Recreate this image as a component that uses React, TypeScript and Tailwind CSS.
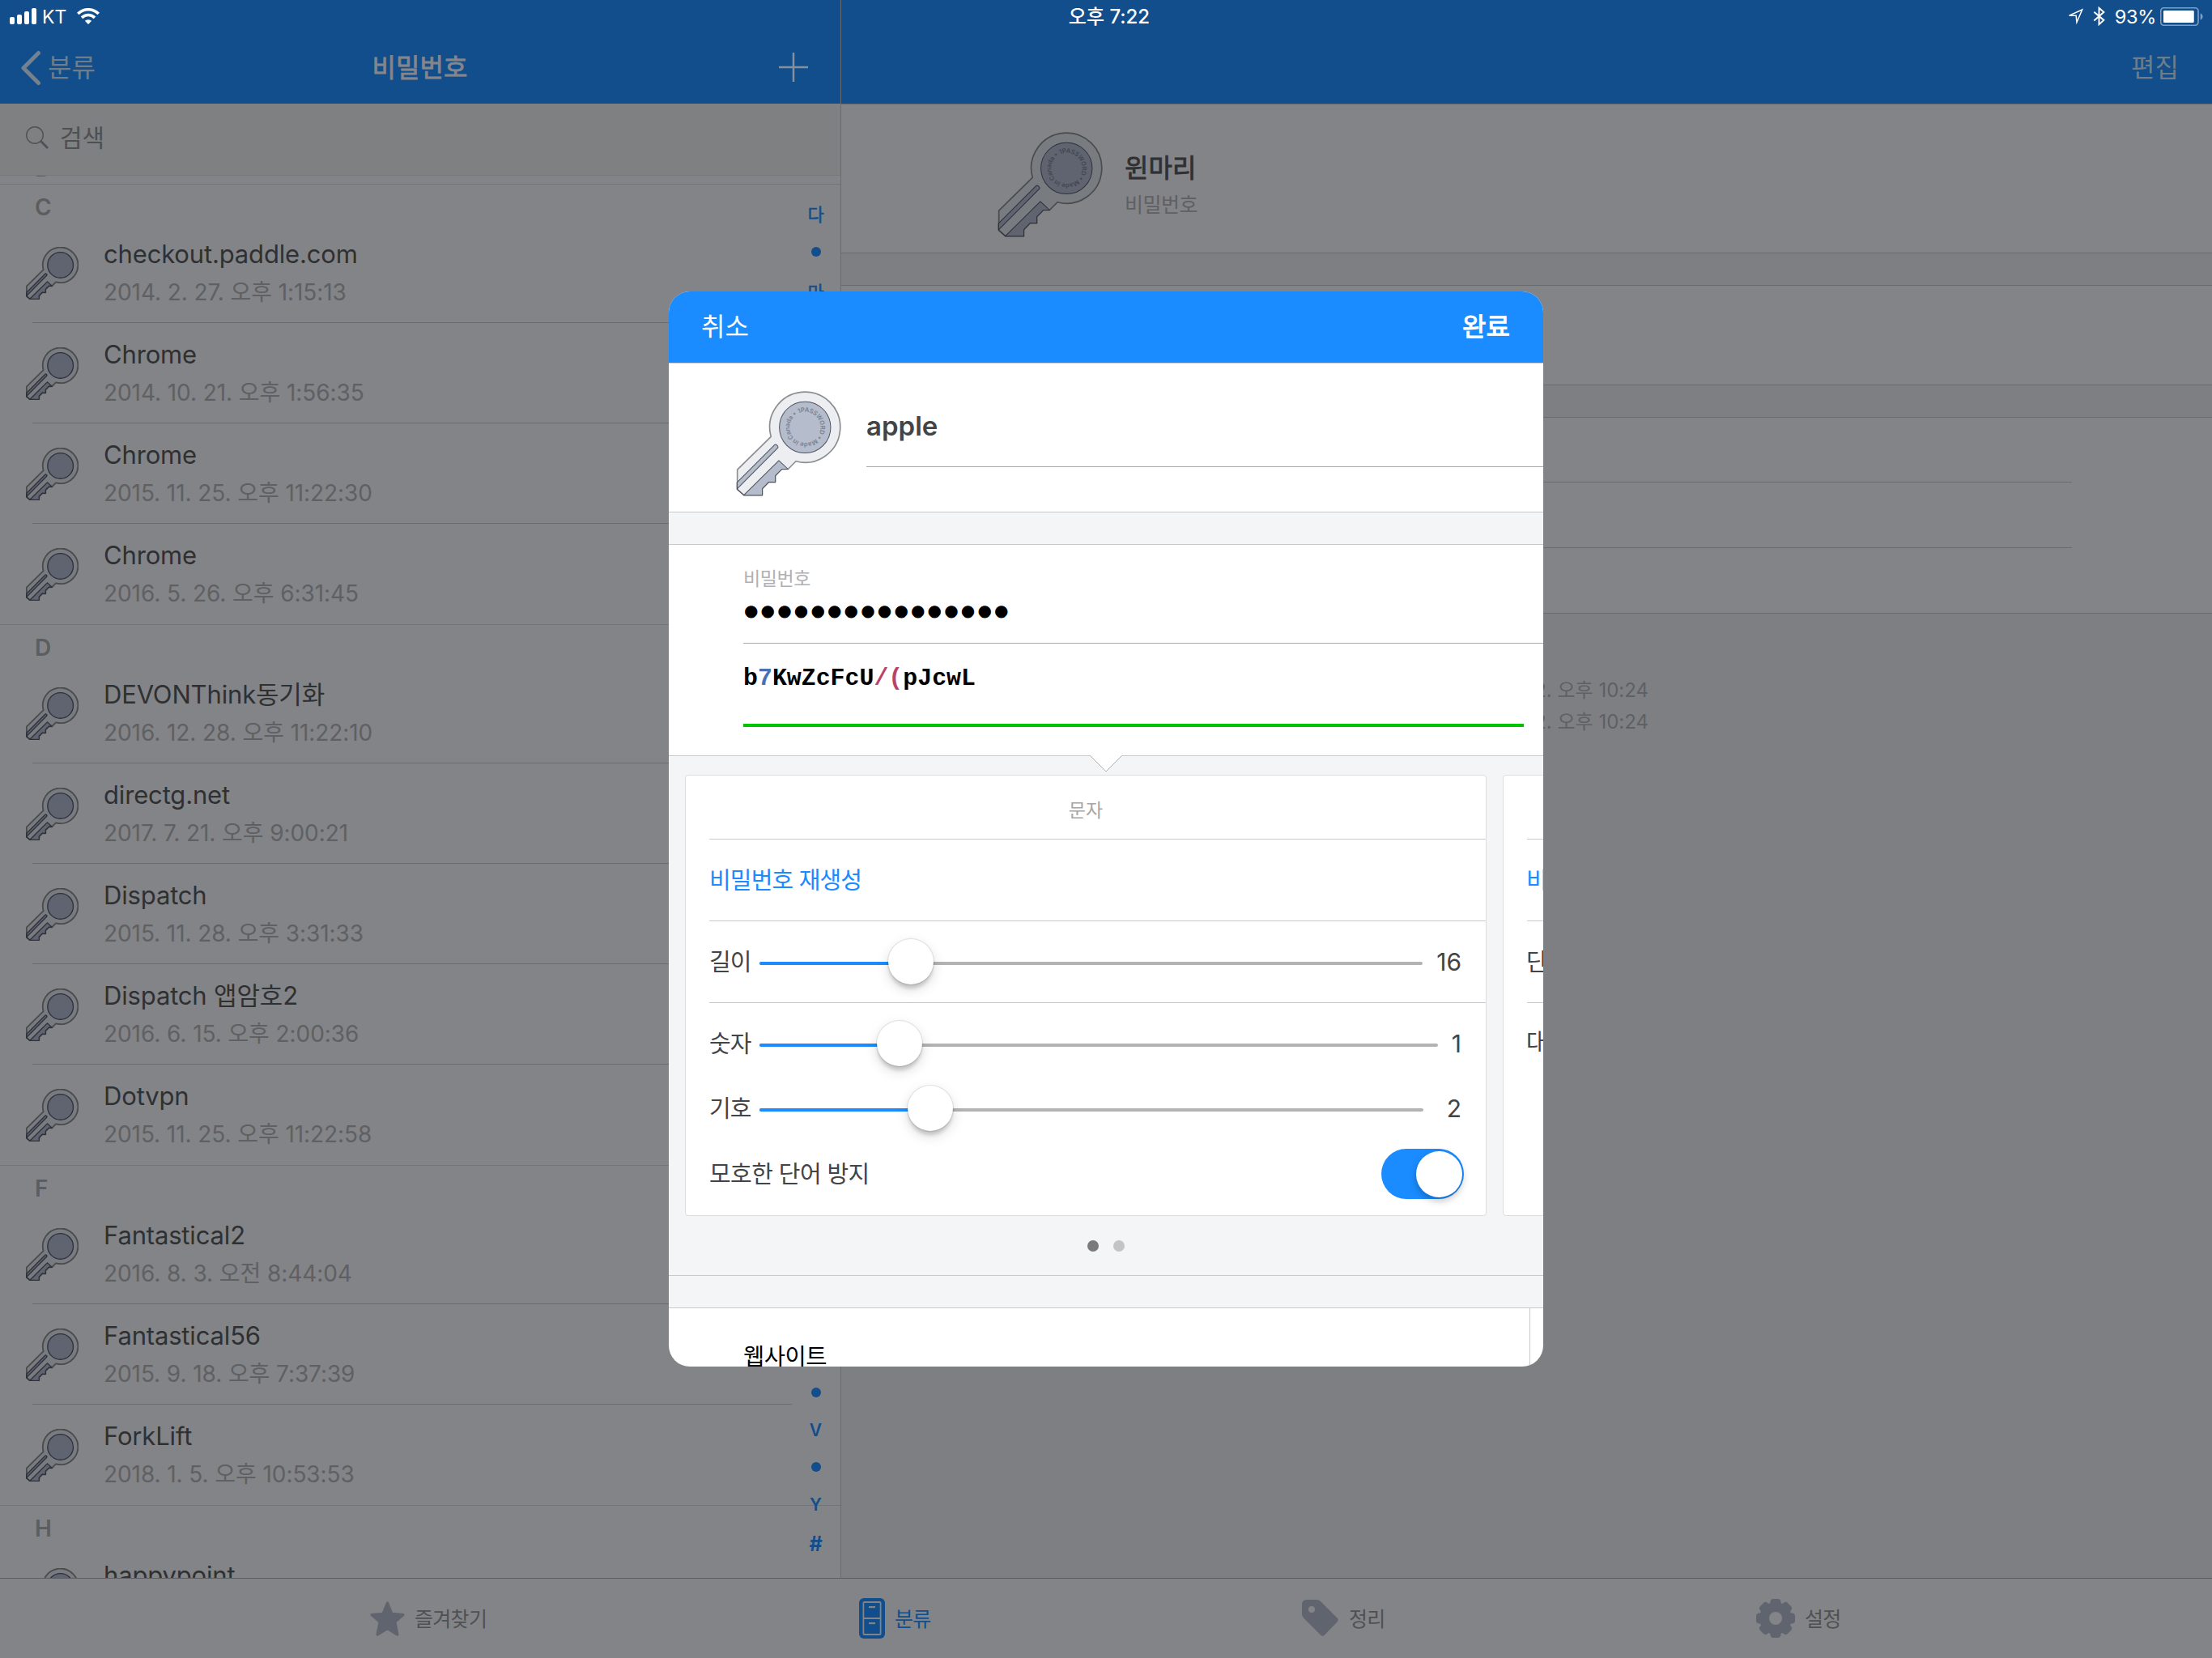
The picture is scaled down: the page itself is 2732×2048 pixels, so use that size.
import React from 'react';

type KeyTone = {
  body: string;
  bodyStroke: string;
  fill: string;
  stroke: string;
  text: string;
};

const brightKey: KeyTone = { body: '#edeef2', bodyStroke: '#8b8d8f', fill: '#b5bccb', stroke: '#4e535f', text: '#7b8190' };
const dimKey: KeyTone = { body: '#787b7f', bodyStroke: '#494b4d', fill: '#5f6470', stroke: '#2e313a', text: '#42464f' };

function KeyIcon({ tone, className, small = false, id }: { tone: KeyTone; className: string; small?: boolean; id: string }) {
  const outer = small ? 11 : 5;
  const inner = small ? 8 : 3;
  return (
    <svg viewBox="58 40 388 388" className={className} strokeLinejoin="round">
      <path
        d="M187 208A130 130 0 1 1 279 299L250 328H227L203 352V376H178L155 400V424H87L63 402V330Z"
        fill={tone.body}
        stroke={tone.bodyStroke}
        strokeWidth={outer}
      />
      <path
        d="M87 424L216 296L250 328H227L203 352V376H178L155 400V424Z"
        fill={tone.fill}
        stroke={tone.stroke}
        strokeWidth={inner}
      />
      <path
        d="M62 377L200 239Q204 235 208 239L212 243Q215 247 211 251L62 401Z"
        fill={tone.fill}
        stroke={tone.stroke}
        strokeWidth={inner}
      />
      <path d="M62 377V402L87 424" fill="none" stroke={tone.stroke} strokeWidth={inner} />
      <circle cx="312.500" cy="174" r="94.500" fill={tone.fill} stroke={tone.stroke} strokeWidth={inner} />
      {!small && (
        <>
          <path id={id} d="M289 122A57 57 0 0 1 336 226A57 57 0 0 1 289 122" fill="none" />
          <text className="font-['Inter',sans-serif] text-[23px] font-semibold" fill={tone.text}>
            <textPath href={`#${id}`} textLength="350">
              1PASSWORD • Made in Canada •
            </textPath>
          </text>
        </>
      )}
    </svg>
  );
}

const sections = [
  {
    letter: 'C',
    items: [
      ['checkout.paddle.com', '2014. 2. 27. 오후 1:15:13'],
      ['Chrome', '2014. 10. 21. 오후 1:56:35'],
      ['Chrome', '2015. 11. 25. 오후 11:22:30'],
      ['Chrome', '2016. 5. 26. 오후 6:31:45'],
    ],
  },
  {
    letter: 'D',
    items: [
      ['DEVONThink동기화', '2016. 12. 28. 오후 11:22:10'],
      ['directg.net', '2017. 7. 21. 오후 9:00:21'],
      ['Dispatch', '2015. 11. 28. 오후 3:31:33'],
      ['Dispatch 앱암호2', '2016. 6. 15. 오후 2:00:36'],
      ['Dotvpn', '2015. 11. 25. 오후 11:22:58'],
    ],
  },
  {
    letter: 'F',
    items: [
      ['Fantastical2', '2016. 8. 3. 오전 8:44:04'],
      ['Fantastical56', '2015. 9. 18. 오후 7:37:39'],
      ['ForkLift', '2018. 1. 5. 오후 10:53:53'],
    ],
  },
  { letter: 'H', items: [['happypoint', '']] },
];

function ListRow({ title, date, last, id }: { title: string; date: string; last: boolean; id: string }) {
  return (
    <div className="relative flex h-[124px] shrink-0 pl-[32px]">
      <KeyIcon tone={dimKey} small id={id} className="mt-[29.500px] size-[65px] shrink-0" />
      <div className="ml-[31px] flex flex-col pt-[19px]">
        <div className="h-[40px] whitespace-nowrap text-[31px] leading-[40px] tracking-[-0.160px] text-[#2f3032]">{title}</div>
        <div className="mt-[9px] h-[36px] whitespace-nowrap text-[28px] leading-[36px] tracking-[-0.080px] text-[#5f6063]">{date}</div>
      </div>
      {!last && <div className="absolute bottom-0 left-[40px] right-[60px] h-px bg-[#6a6b6e]" />}
    </div>
  );
}

function IndexDot() {
  return <span className="size-[12px] rounded-full bg-[#114e8b]" />;
}

function Sidebar() {
  return (
    <div className="relative flex w-[1039px] shrink-0 flex-col border-r border-[#6a6b6f] bg-[#838487]">
      <div className="grid h-[128px] shrink-0 grid-cols-[1fr_auto_1fr] items-center bg-[#114e8b] pl-[25px] pr-[40px] pt-[40px]">
        <div className="flex items-center gap-[8px] text-[#6f7c8a]">
          <svg viewBox="0 0 26 44" className="h-[44px] w-[26px]" fill="none" stroke="#74818e" strokeWidth="5" strokeLinecap="round" strokeLinejoin="round">
            <path d="M22.500 3.500L4 22L22.500 40.500" />
          </svg>
          <span className="text-[32px] leading-[40px]">분류</span>
        </div>
        <div className="pl-[14px] text-[32px] leading-[40px] text-[#84868b] [-webkit-text-stroke:0.8px_#84868b]">비밀번호</div>
        <svg viewBox="0 0 36 36" className="mb-[2px] size-[36px] justify-self-end" stroke="#84909c" strokeWidth="2.500">
          <path d="M18 0V36M0 18H36" />
        </svg>
      </div>
      <div className="flex h-[89px] shrink-0 items-center gap-[13px] border-b border-[#74787b] bg-[#7e8082] pb-[4px] pl-[31px]">
        <svg viewBox="0 0 30 30" className="size-[30px]" fill="none" stroke="#505154">
          <circle cx="12" cy="12" r="10.300" strokeWidth="1.400" />
          <path d="M19.500 19.500L28 28" strokeWidth="2.800" />
        </svg>
        <span className="text-[30px] leading-[40px] text-[#4e4f52]">검색</span>
      </div>
      <div className="relative h-[10px] shrink-0 overflow-hidden">
        <div className="absolute bottom-[12px] left-[43px] text-[28px] font-semibold leading-[14px] text-[#5c5d60]">B</div>
      </div>
      <div className="flex min-h-0 flex-1 flex-col overflow-hidden">
        {sections.map((s) => (
          <React.Fragment key={s.letter}>
            <div className="flex h-[48px] shrink-0 items-center border-t border-[#727377] pl-[43px] pt-[8px] text-[28px] font-semibold leading-[38px] text-[#5c5d60]">
              {s.letter}
            </div>
            {s.items.map(([title, date], i) => (
              <ListRow key={i} id={`${s.letter}${i}`} title={title} date={date} last={i === s.items.length - 1} />
            ))}
          </React.Fragment>
        ))}
      </div>
      <div className="absolute left-[987px] top-[242px] flex w-[41px] flex-col items-center text-[22px] text-[#114e8b] [-webkit-text-stroke:0.5px_#114e8b]">
        <span className="flex h-[46px] items-center">다</span>
        <span className="flex h-[46px] items-center">
          <IndexDot />
        </span>
        <span className="flex h-[54px] items-center">마</span>
      </div>
      <div className="absolute left-[987px] top-[1697px] flex w-[41px] flex-col items-center text-[21px] font-semibold text-[#114e8b]">
        <span className="flex h-[46px] items-center">
          <IndexDot />
        </span>
        <span className="flex h-[46px] items-center pt-px">V</span>
        <span className="flex h-[46px] items-center">
          <IndexDot />
        </span>
        <span className="flex h-[47px] items-center">Y</span>
        <span className="flex h-[51px] items-center text-[25px] font-bold">#</span>
      </div>
    </div>
  );
}

function Detail() {
  return (
    <div className="flex flex-1 flex-col bg-[#7e7f82]">
      <div className="flex h-[128px] shrink-0 items-center justify-end bg-[#114e8b] pr-[41px] pt-[40px] text-[32px] leading-[40px] text-[#6f7c8a]">
        편집
      </div>
      <div className="flex h-[185px] shrink-0 border-y border-[#6a6b6e] bg-[#838487] pl-[193px]">
        <KeyIcon tone={dimKey} id="detail-key" className="mt-[34px] size-[130px] shrink-0" />
        <div className="ml-[27px] flex flex-col pt-[59px]">
          <div className="text-[32px] leading-[40px] text-[#2f3032] [-webkit-text-stroke:0.8px_#2f3032]">윈마리</div>
          <div className="mt-[7px] text-[25px] leading-[36px] tracking-[-0.500px] text-[#5f6063]">비밀번호</div>
        </div>
      </div>
      <div className="h-[39px] shrink-0" />
      <div className="h-[124px] shrink-0 border-y border-[#6a6b6e] bg-[#838487]" />
      <div className="h-[39px] shrink-0" />
      <div className="flex h-[243px] shrink-0 flex-col border-y border-[#6a6b6e] bg-[#838487] pr-[173px]">
        <div className="h-[80px] border-b border-[#6a6b6e]" />
        <div className="h-[81px] border-b border-[#6a6b6e]" />
      </div>
      <div className="w-[997px] pt-[75px] text-right text-[24px] leading-[39px] text-[#5f6064]">
        <div>2. 오후 10:24</div>
        <div>2. 오후 10:24</div>
      </div>
    </div>
  );
}

function StatusBar() {
  return (
    <div className="absolute inset-x-0 top-0 grid h-[40px] grid-cols-[1fr_auto_1fr] items-center pl-[12px] pr-[11px] text-[24px] leading-[30px] text-white">
      <div className="flex items-center">
        <div className="flex h-[20px] items-end gap-[3px]">
          <span className="h-[9px] w-[6px] rounded-[2px] bg-white" />
          <span className="h-[12px] w-[6px] rounded-[2px] bg-white" />
          <span className="h-[16px] w-[6px] rounded-[2px] bg-white" />
          <span className="h-[20px] w-[6px] rounded-[2px] bg-white" />
        </div>
        <span className="ml-[7px] mt-[2px] text-[23px]">KT</span>
        <svg viewBox="285 30 84 60" className="ml-[13px] h-[20px] w-[28px]" fill="none" stroke="#fff" strokeWidth="11">
          <path d="M288.800 51.200A54 54 0 0 1 365.200 51.200" />
          <path d="M303 65.500A34 34 0 0 1 351 65.500" />
          <path d="M327 90L314.500 77.500A18 18 0 0 1 339.500 77.500Z" fill="#fff" stroke="none" />
        </svg>
      </div>
      <div className="mt-[2px] pl-[7px] font-medium">오후 7:22</div>
      <div className="flex items-center justify-end">
        <svg viewBox="104 32 58 60" className="h-[20px] w-[19px]" fill="none" stroke="#fff" strokeWidth="4.500">
          <path d="M109 59.500L158 37.500L137.500 85L135 60Z" />
        </svg>
        <svg viewBox="196 24 46 72" className="ml-[12px] h-[24px] w-[15px]" fill="none" stroke="#fff" strokeWidth="6">
          <path d="M200 44L237 75L219 91V29L237 45L200 77" />
        </svg>
        <span className="ml-[12px] mt-[2px] text-[23.500px] tracking-[-0.300px]">93%</span>
        <svg viewBox="444 27 160 69" className="ml-[5px] h-[23px] w-[53px]">
          <rect x="446" y="29" width="140" height="65" rx="12" fill="none" stroke="#7d9fc4" strokeWidth="5" />
          <rect x="456" y="39" width="114" height="45" rx="4" fill="#fff" />
          <path d="M594 49Q603 54 603 61.500T594 74Z" fill="#7d9fc4" />
        </svg>
      </div>
    </div>
  );
}

function TabBar() {
  return (
    <div className="flex h-[99px] shrink-0 items-center border-t border-[#5b5c60] bg-[#838487] pl-[457px] text-[25px] leading-[36px] tracking-[-0.700px] text-[#4f5053]">
      <div className="flex w-[604px] items-center">
        <svg viewBox="50 87 128 129" className="size-[43px]" fill="#60646f" stroke="#60646f" strokeWidth="10" strokeLinejoin="round">
          <path d="M114 93L130 133L172 137L142 163L151 210L114 188L77 210L86 163L56 137L98 133Z" />
        </svg>
        <span className="ml-[12px] mt-[2px]">즐겨찾기</span>
      </div>
      <div className="flex w-[547px] items-center text-[#114e8b]">
        <svg viewBox="0 0 32 50" className="h-[50px] w-[32px]">
          <rect width="32" height="50" rx="6" fill="#114e8b" />
          <rect x="4.500" y="4" width="23" height="42" rx="2" fill="#838487" />
          <rect x="6.300" y="6" width="19.400" height="18" fill="#114e8b" />
          <rect x="6.300" y="26" width="19.400" height="18" fill="#114e8b" />
          <rect x="12" y="10" width="8" height="2.200" fill="#838487" />
          <rect x="12" y="30" width="8" height="2.200" fill="#838487" />
        </svg>
        <span className="ml-[12px] mt-[2px]">분류</span>
      </div>
      <div className="flex w-[561px] items-center">
        <svg viewBox="0 0 46 46" className="size-[46px]">
          <path
            fillRule="evenodd"
            fill="#60646f"
            d="M6 0H18Q21 0 23 2L43.500 22.500Q46 25 43.500 27.500L28 43.500Q25.500 46 23 43.500L2 22.500Q0 20.500 0 18V6Q0 0 6 0ZM12 8A4 4 0 1 0 12 16A4 4 0 1 0 12 8Z"
          />
        </svg>
        <span className="ml-[12px] mt-[2px]">정리</span>
      </div>
      <div className="flex items-center">
        <svg viewBox="-24 -24 48 48" className="size-[48px]" fill="#60646f">
          <circle r="20" />
          <rect x="-6.500" y="-24" width="13" height="48" rx="4" />
          <rect x="-6.500" y="-24" width="13" height="48" rx="4" transform="rotate(45)" />
          <rect x="-6.500" y="-24" width="13" height="48" rx="4" transform="rotate(90)" />
          <rect x="-6.500" y="-24" width="13" height="48" rx="4" transform="rotate(135)" />
          <circle r="8" fill="#838487" />
        </svg>
        <span className="ml-[12px] mt-[2px]">설정</span>
      </div>
    </div>
  );
}

function SliderRow({ label, value, width, position }: { label: string; value: string; width: number; position: number }) {
  return (
    <div className="flex h-full items-center pr-[30px] text-[#434446]">
      <span className="mt-[2px] w-[62px] shrink-0 text-[29px] leading-[36px] tracking-[-1px]">{label}</span>
      <div className="relative mt-[4px] h-[4px] shrink-0 rounded-full bg-[#b3b3b5]" style={{ width }}>
        <div className="h-full rounded-full bg-[#1a8cff]" style={{ width: position }} />
        <div
          className="absolute -top-[28px] -ml-[28px] size-[56px] rounded-full bg-white shadow-[0_0_1px_1px_rgba(0,0,0,0.100),0_6px_4px_-1px_rgba(0,0,0,0.150),0_6px_16px_rgba(0,0,0,0.150)]"
          style={{ left: position }}
        />
      </div>
      <span className="flex-1 text-right text-[30px] leading-[36px]">{value}</span>
    </div>
  );
}

function Generator() {
  return (
    <div className="relative flex h-[642px] shrink-0 flex-col border-b border-[#c8c9cc] bg-[#f4f5f7]">
      <svg viewBox="0 0 40 21" className="absolute -top-px left-[520px] h-[21px] w-[40px]">
        <path d="M0.500 0L20 20L39.500 0Z" fill="#fff" />
        <path d="M0.500 0.500L20 20L39.500 0.500" fill="none" stroke="#b0b1b4" strokeWidth="1" />
      </svg>
      <div className="ml-[20px] mt-[23px] flex gap-[20px]">
        <div className="h-[545px] w-[990px] shrink-0 rounded-[4px] border border-[#dcdddf] bg-white pl-[29px]">
          <div className="flex h-[79px] items-center justify-center border-b border-[#c8c9cc] pr-[29px] pt-[9px] text-[23px] text-[#a6a6a8]">
            문자
          </div>
          <div className="flex h-[101px] items-center border-b border-[#c8c9cc] pt-[2px] text-[29px] tracking-[-0.850px] text-[#1a8cff]">비밀번호 재생성</div>
          <div className="h-[101px] border-b border-[#c8c9cc]">
            <SliderRow label="길이" value="16" width={819} position={187} />
          </div>
          <div className="mt-[10px] h-[80px]">
            <SliderRow label="숫자" value="1" width={838} position={173} />
          </div>
          <div className="h-[80px]">
            <SliderRow label="기호" value="2" width={820} position={211} />
          </div>
          <div className="flex h-[80px] items-center justify-between pr-[27px] pt-[2px] text-[29px] tracking-[-0.600px] text-[#434446]">
            <span className="mt-[1px]">모호한 단어 방지</span>
            <span className="flex h-[62px] w-[102px] items-center justify-end rounded-full bg-[#1a8cff] pr-[2px]">
              <span className="size-[57px] rounded-full bg-white shadow-[0_4px_10px_rgba(0,0,0,0.250)]" />
            </span>
          </div>
        </div>
        <div className="h-[545px] w-[990px] shrink-0 rounded-[4px] border border-[#dcdddf] bg-white pl-[28px] text-[29px] text-[#434446]">
          <div className="ml-[1px] h-[79px] border-b border-[#c8c9cc]" />
          <div className="ml-[1px] h-[101px] border-b border-[#c8c9cc]">
            <div className="-ml-[1px] flex h-full items-center pt-[2px] text-[#1a8cff]">비</div>
          </div>
          <div className="ml-[1px] h-[101px] border-b border-[#c8c9cc]">
            <div className="-ml-[1px] flex h-full items-center pt-[2px]">단</div>
          </div>
          <div className="flex h-[97px] items-center">대</div>
        </div>
      </div>
      <div className="ml-[517px] mt-[30px] flex gap-[18px]">
        <span className="size-[14px] rounded-full bg-[#7a7a7c]" />
        <span className="size-[14px] rounded-full bg-[#c3c4c6]" />
      </div>
    </div>
  );
}

function EditModal() {
  return (
    <div className="absolute left-[826px] top-[360px] flex h-[1328px] w-[1080px] flex-col overflow-hidden rounded-[26px] bg-white">
      <div className="flex h-[88px] shrink-0 items-center justify-between bg-[#1a8cff] pl-[40px] pr-[41px] text-[32px] leading-[40px] text-white">
        <span>취소</span>
        <span className="[-webkit-text-stroke:1px_#fff]">완료</span>
      </div>
      <div className="flex h-[185px] shrink-0 border-y border-[#c8c9cc] pl-[83px]">
        <KeyIcon tone={brightKey} id="edit-key" className="mt-[34px] size-[130px] shrink-0" />
        <div className="ml-[31px] flex h-[128px] flex-1 items-center border-b border-[#a8a9ab] pt-[29px] text-[33px] font-semibold text-[#434446]">
          apple
        </div>
      </div>
      <div className="h-[39px] shrink-0 bg-[#f4f5f7]" />
      <div className="flex h-[262px] shrink-0 flex-col border-y border-[#c8c9cc] pl-[92px]">
        <div className="mt-[27px] text-[23px] leading-[30px] tracking-[-0.400px] text-[#b0b0b2]">비밀번호</div>
        <div className="mt-[4px] border-b border-[#a8a9ab] pb-[20px] pl-[1px] font-['DejaVu_Sans',sans-serif] text-[20px] leading-[40px] tracking-[3.150px] text-black">
          ●●●●●●●●●●●●●●●●
        </div>
        <div className="mt-[23px] font-['Liberation_Mono',monospace] text-[29.900px] font-bold leading-[40px] text-black">
          b<span className="text-[#4a6fb5]">7</span>KwZcFcU<span className="text-[#b8436a]">/(</span>pJcwL
        </div>
        <div className="mt-[36px] h-[4px] w-[964px] bg-[#00c400]" />
      </div>
      <Generator />
      <div className="h-[39px] shrink-0 bg-[#f4f5f7]" />
      <div className="flex flex-1 border-t border-[#c8c9cc] pl-[92px]">
        <div className="w-[972px] border-r border-[#c8c9cc] pt-[40px] text-[28.500px] leading-[40px] tracking-[-0.500px] text-black">웹사이트</div>
      </div>
    </div>
  );
}

export default function App() {
  return (
    <div className="relative flex h-[2048px] w-[2732px] flex-col overflow-hidden bg-[#838487] font-['Inter','Noto_Sans_CJK_KR',sans-serif]">
      <div className="flex h-[1949px] shrink-0">
        <Sidebar />
        <Detail />
      </div>
      <TabBar />
      <StatusBar />
      <EditModal />
    </div>
  );
}
